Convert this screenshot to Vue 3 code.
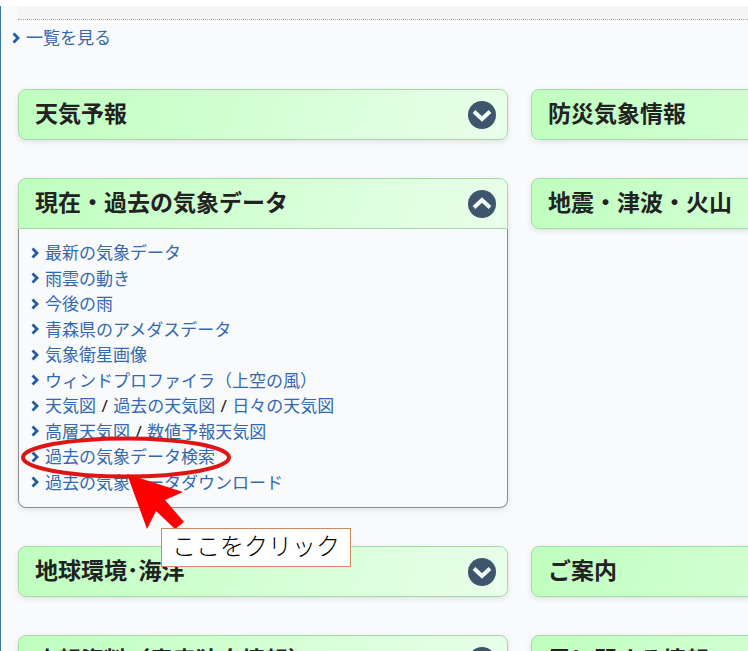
<script setup>
import { ref } from 'vue'

const sections = ref([
  { title: '天気予報' },
  { title: '防災気象情報' },
  {
    title: '現在・過去の気象データ',
    open: true,
    rows: [
      ['最新の気象データ'],
      ['雨雲の動き'],
      ['今後の雨'],
      ['青森県のアメダスデータ'],
      ['気象衛星画像'],
      ['ウィンドプロファイラ（上空の風）'],
      ['天気図', '過去の天気図', '日々の天気図'],
      ['高層天気図', '数値予報天気図'],
      ['過去の気象データ検索'],
      ['過去の気象データダウンロード']
    ]
  },
  { title: '地震・津波・火山' },
  { title: '地球環境･海洋' },
  { title: 'ご案内' },
  { title: '広報資料（青森独自情報）' },
  { title: '雪に関する情報' }
])
</script>

<template>
  <div class="page">
    <div class="frame">
      <div class="news-end"></div>
      <p class="more">
        <svg class="chev" viewBox="0 0 8 12" aria-hidden="true"><path d="M1.500 1.500 6 6l-4.500 4.500" /></svg>
        <a href="#list">一覧を見る</a>
      </p>
      <main class="grid">
        <section v-for="s in sections" :key="s.title" class="panel" :class="{ open: s.open }">
          <h2>
            <button type="button" class="head" :aria-expanded="!!s.open" @click="s.open = !s.open">
              <span class="title">{{ s.title }}</span>
              <svg class="toggle" viewBox="0 0 28 28" aria-hidden="true">
                <circle cx="14" cy="14" r="14" />
                <path :d="s.open ? 'M6 17.500 14 10l8 7.500' : 'M6 10.500 14 18l8-7.500'" />
              </svg>
            </button>
          </h2>
          <ul v-if="s.open && s.rows" class="links">
            <li v-for="row in s.rows" :key="row[0]">
              <svg class="chev" viewBox="0 0 8 12" aria-hidden="true"><path d="M1.500 1.500 6 6l-4.500 4.500" /></svg>
              <span>
                <template v-for="(t, i) in row" :key="t"><span v-if="i" class="sep"> / </span><a href="#data">{{ t }}</a></template>
              </span>
            </li>
          </ul>
        </section>
      </main>
    </div>
    <svg class="marks" viewBox="0 0 212 104" aria-hidden="true">
      <ellipse cx="106" cy="21.500" rx="103" ry="19" />
      <path d="M107 38 163 56 145 64 164 86 155 93 136 75 127 93z" />
    </svg>
    <div class="callout">ここをクリック</div>
  </div>
</template>

<style>
body {
  background: #fff;
}
</style>

<style scoped>
.page {
  position: relative;
  height: 100vh;
  overflow: hidden;
  box-sizing: border-box;
  padding-top: 6px;
  font-family: "Noto Sans", "Noto Sans CJK JP", sans-serif;
  color: #222;
}
.frame {
  border-left: 1px solid #3a74a8;
  background: #f9fafc;
  min-height: 100%;
}
.news-end {
  height: 13px;
  margin-left: 17px;
  background: #f5f5f5;
  border-bottom: 1px dotted #aaa;
}
a {
  color: #3269b0;
  text-decoration: none;
}
.more {
  display: flex;
  align-items: center;
  gap: 6px;
  margin: 0;
  padding: 5px 0 0 11px;
  font-size: 17px;
  line-height: 26px;
}
.chev {
  flex: none;
  width: 8px;
  height: 12px;
  fill: none;
  stroke: #1f5ba6;
  stroke-width: 2.8;
}
.grid {
  display: grid;
  grid-template-columns: repeat(2, minmax(490px, 1fr));
  gap: 38px 23px;
  padding: 38px 0 0 17px;
}
.panel {
  align-self: start;
  border-radius: 8px;
  box-shadow: 0 2px 6px rgba(0, 0, 0, 0.1);
}
h2 {
  margin: 0;
}
.head {
  display: flex;
  align-items: center;
  justify-content: space-between;
  box-sizing: border-box;
  width: 100%;
  height: 51px;
  padding: 0 11px 0 16px;
  border: 1px solid #a3dba5;
  border-radius: 8px;
  background: linear-gradient(110deg, #bfffbf, #e9ffea);
  font: bold 23px/32px "Noto Sans CJK JP", sans-serif;
  color: #222;
  text-align: left;
  white-space: nowrap;
}
.open .head {
  border-radius: 8px 8px 0 0;
}
.title {
  padding-bottom: 5px;
}
.toggle {
  flex: none;
  width: 28px;
  height: 28px;
  fill: #3d566e;
}
.toggle path {
  fill: none;
  stroke: #f2fff3;
  stroke-width: 4;
}
.links {
  margin: 0;
  padding: 11px 12px 12px;
  border: 1px solid #888b90;
  border-top: 0;
  border-radius: 0 0 8px 8px;
  list-style: none;
  font-size: 17px;
  line-height: 1.5;
}
.links li {
  display: flex;
  align-items: center;
  gap: 6px;
  white-space: nowrap;
}
.sep {
  padding: 0 1px;
  white-space: pre;
}
.marks {
  position: absolute;
  left: 20px;
  top: 436px;
  width: 212px;
  height: 104px;
  fill: #f00;
}
.marks ellipse {
  fill: none;
  stroke: #df1414;
  stroke-width: 4;
}
.callout {
  position: absolute;
  left: 161px;
  top: 528px;
  padding: 0 10px 5px;
  border: 1px solid #cf8a5b;
  background: #fff;
  font: 300 24px/32px "Noto Sans CJK JP", sans-serif;
  color: #000;
}
</style>
